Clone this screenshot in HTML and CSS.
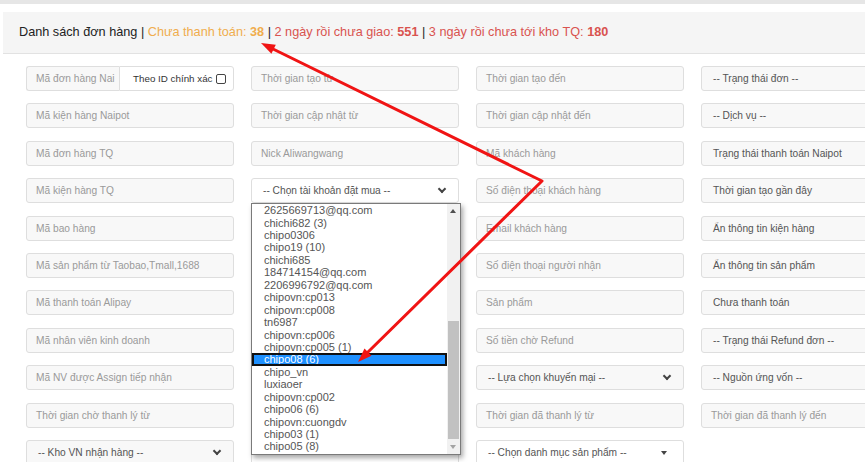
FILE: index.html
```html
<!DOCTYPE html>
<html lang="vi">
<head>
<meta charset="utf-8">
<title>Danh sách đơn hàng</title>
<link rel="stylesheet" href="styles.css">
</head>
<body>
<div class="topbar"></div>
<div class="page">
  <div class="heading">
    <span>Danh sách đơn hàng | </span><span class="warn">Chưa thanh toán: <b>38</b></span><span> | </span><span class="danger">2 ngày rồi chưa giao: <b>551</b></span><span> | </span><span class="danger">3 ngày rồi chưa tới kho TQ: <b>180</b></span>
  </div>

  <div class="grid">
    <!-- row 1 -->
    <div class="group">
      <div class="field ph group-input">Mã đơn hàng Nai</div>
      <div class="addon">Theo ID chính xác <span class="check"></span></div>
    </div>
    <div class="field ph">Thời gian tạo từ</div>
    <div class="field ph">Thời gian tạo đến</div>
    <div class="field sel">-- Trạng thái đơn --</div>
    <!-- row 2 -->
    <div class="field ph">Mã kiện hàng Naipot</div>
    <div class="field ph">Thời gian cập nhật từ</div>
    <div class="field ph">Thời gian cập nhật đến</div>
    <div class="field sel">-- Dịch vụ --</div>
    <!-- row 3 -->
    <div class="field ph">Mã đơn hàng TQ</div>
    <div class="field ph">Nick Aliwangwang</div>
    <div class="field ph">Mã khách hàng</div>
    <div class="field sel">Trạng thái thanh toán Naipot</div>
    <!-- row 4 -->
    <div class="field ph">Mã kiện hàng TQ</div>
    <div class="cell-open">
      <div class="field sel white">-- Chọn tài khoản đặt mua --<span class="chev"></span></div>
      <div class="listbox">
        <ul class="options">
          <li>2625669713@qq.com</li>
          <li>chichi682 (3)</li>
          <li>chipo0306</li>
          <li>chipo19 (10)</li>
          <li>chichi685</li>
          <li>184714154@qq.com</li>
          <li>2206996792@qq.com</li>
          <li>chipovn:cp013</li>
          <li>chipovn:cp008</li>
          <li>tn6987</li>
          <li>chipovn:cp006</li>
          <li>chipovn:cp005 (1)</li>
          <li class="selected">chipo08 (6)</li>
          <li>chipo_vn</li>
          <li>luxiaoer</li>
          <li>chipovn:cp002</li>
          <li>chipo06 (6)</li>
          <li>chipovn:cuongdv</li>
          <li>chipo03 (1)</li>
          <li>chipo05 (8)</li>
        </ul>
        <div class="scrollbar">
          <span class="sb-up"></span>
          <span class="sb-thumb"></span>
          <span class="sb-down"></span>
        </div>
      </div>
    </div>
    <div class="field ph">Số điện thoại khách hàng</div>
    <div class="field sel">Thời gian tạo gần đây</div>
    <!-- row 5 -->
    <div class="field ph">Mã bao hàng</div>
    <div class="field ph"></div>
    <div class="field ph">Email khách hàng</div>
    <div class="field sel">Ẩn thông tin kiện hàng</div>
    <!-- row 6 -->
    <div class="field ph">Mã sản phẩm từ Taobao,Tmall,1688</div>
    <div class="field ph"></div>
    <div class="field ph">Số điện thoại người nhận</div>
    <div class="field sel">Ẩn thông tin sản phẩm</div>
    <!-- row 7 -->
    <div class="field ph">Mã thanh toán Alipay</div>
    <div class="field ph"></div>
    <div class="field ph">Sản phẩm</div>
    <div class="field sel">Chưa thanh toán</div>
    <!-- row 8 -->
    <div class="field ph">Mã nhân viên kinh doanh</div>
    <div class="field ph"></div>
    <div class="field ph">Số tiền chờ Refund</div>
    <div class="field sel">-- Trạng thái Refund đơn --</div>
    <!-- row 9 -->
    <div class="field ph">Mã NV được Assign tiếp nhận</div>
    <div class="field ph"></div>
    <div class="field sel">-- Lựa chọn khuyến mại --<span class="chev"></span></div>
    <div class="field sel">-- Nguồn ứng vốn --</div>
    <!-- row 10 -->
    <div class="field ph">Thời gian chờ thanh lý từ</div>
    <div class="field ph"></div>
    <div class="field ph">Thời gian đã thanh lý từ</div>
    <div class="field ph">Thời gian đã thanh lý đến</div>
    <!-- row 11 -->
    <div class="field sel">-- Kho VN nhận hàng --<span class="chev"></span></div>
    <div class="field sel white"></div>
    <div class="field sel white">-- Chọn danh mục sản phẩm --<span class="caret"></span></div>
    <div></div>
  </div>
</div>

<svg class="arrows" width="865" height="462" viewBox="0 0 865 462" xmlns="http://www.w3.org/2000/svg">
  <polyline points="271,48 542,181 366,354" fill="none" stroke="#f01414" stroke-width="3" stroke-linejoin="round"/>
  <polygon points="261,43 275.8,44.7 271.4,53.7" fill="#f01414"/>
  <polygon points="358,362 364.5,348.6 371.5,355.8" fill="#f01414"/>
</svg>
</body>
</html>
```

FILE: styles.css
```css
* { box-sizing: border-box; }

html, body {
  margin: 0;
  padding: 0;
}

body {
  width: 865px;
  height: 462px;
  overflow: hidden;
  position: relative;
  background: #ffffff;
  font-family: "Liberation Sans", Arial, sans-serif;
  color: #333;
}

.topbar {
  height: 4px;
  background: #e6e6e6;
}

.page {
  padding-top: 8px;
  width: 960px;
}

.heading {
  margin-left: 3px;
  height: 42px;
  line-height: 41px;
  padding-left: 16px;
  background: #f5f5f5;
  border-bottom: 1px solid #e2e2e2;
  font-size: 12.7px;
  color: #222;
  white-space: nowrap;
}

.heading b { font-weight: bold; }
.warn { color: #f0ad4e; }
.danger { color: #d9534f; }

.grid {
  margin-top: 12px;
  padding-left: 26px;
  display: grid;
  grid-template-columns: repeat(4, 208px);
  grid-auto-rows: 25px;
  column-gap: 17px;
  row-gap: 12.4px;
}

.field {
  position: relative;
  height: 25px;
  border: 1px solid #dedede;
  border-radius: 3px;
  background: #f8f8f8;
  font-size: 10.2px;
  line-height: 23px;
  padding-left: 9px;
  white-space: nowrap;
  overflow: hidden;
}

.ph { color: #9a9a9a; }

.sel {
  color: #555;
  padding-left: 11px;
}

.white { background: #ffffff; }

.group {
  display: flex;
  height: 25px;
}

.group-input {
  width: 93px;
  flex: none;
  border-radius: 3px 0 0 3px;
  border-right: none;
}

.addon {
  flex: 1;
  height: 25px;
  border: 1px solid #dedede;
  border-radius: 0 3px 3px 0;
  background: #fff;
  font-size: 9.8px;
  line-height: 23px;
  color: #333;
  padding-left: 13px;
  white-space: nowrap;
  display: flex;
  align-items: center;
  gap: 3px;
}

.check {
  width: 10px;
  height: 10px;
  border: 1px solid #444;
  border-radius: 2px;
  background: #fff;
}

.chev {
  position: absolute;
  right: 13px;
  top: 7px;
  width: 6px;
  height: 6px;
  border-right: 2px solid #444;
  border-bottom: 2px solid #444;
  transform: rotate(45deg);
}

.caret {
  position: absolute;
  right: 16px;
  top: 10px;
  width: 0;
  height: 0;
  border-left: 3px solid transparent;
  border-right: 3px solid transparent;
  border-top: 4px solid #444;
}

.cell-open {
  position: relative;
  height: 25px;
}

.listbox {
  position: absolute;
  left: 0;
  top: 25px;
  width: 210px;
  height: 252px;
  background: #fff;
  border: 1px solid #7a7a7a;
  box-shadow: 2px 3px 5px rgba(0, 0, 0, 0.35);
  z-index: 5;
  display: flex;
}

.options {
  list-style: none;
  margin: 0;
  padding: 0;
  flex: 1;
  font-size: 11px;
  color: #555;
}

.options li {
  height: 12.45px;
  line-height: 12.45px;
  padding-left: 12px;
  white-space: nowrap;
}

.options li.selected {
  background: #1e90ff;
  color: #fff;
  outline: 2px solid #111;
  outline-offset: -2px;
}

.scrollbar {
  width: 13px;
  background: #f1f1f1;
  position: relative;
}

.sb-up,
.sb-down {
  position: absolute;
  left: 3px;
  width: 0;
  height: 0;
  border-left: 3px solid transparent;
  border-right: 3px solid transparent;
}

.sb-up {
  top: 5px;
  border-bottom: 4px solid #505050;
}

.sb-down {
  bottom: 5px;
  border-top: 4px solid #a3a3a3;
}

.sb-thumb {
  position: absolute;
  left: 1px;
  right: 1px;
  top: 117px;
  height: 118px;
  background: #c1c1c1;
}

.arrows {
  position: absolute;
  left: 0;
  top: 0;
  z-index: 10;
  pointer-events: none;
}
```
